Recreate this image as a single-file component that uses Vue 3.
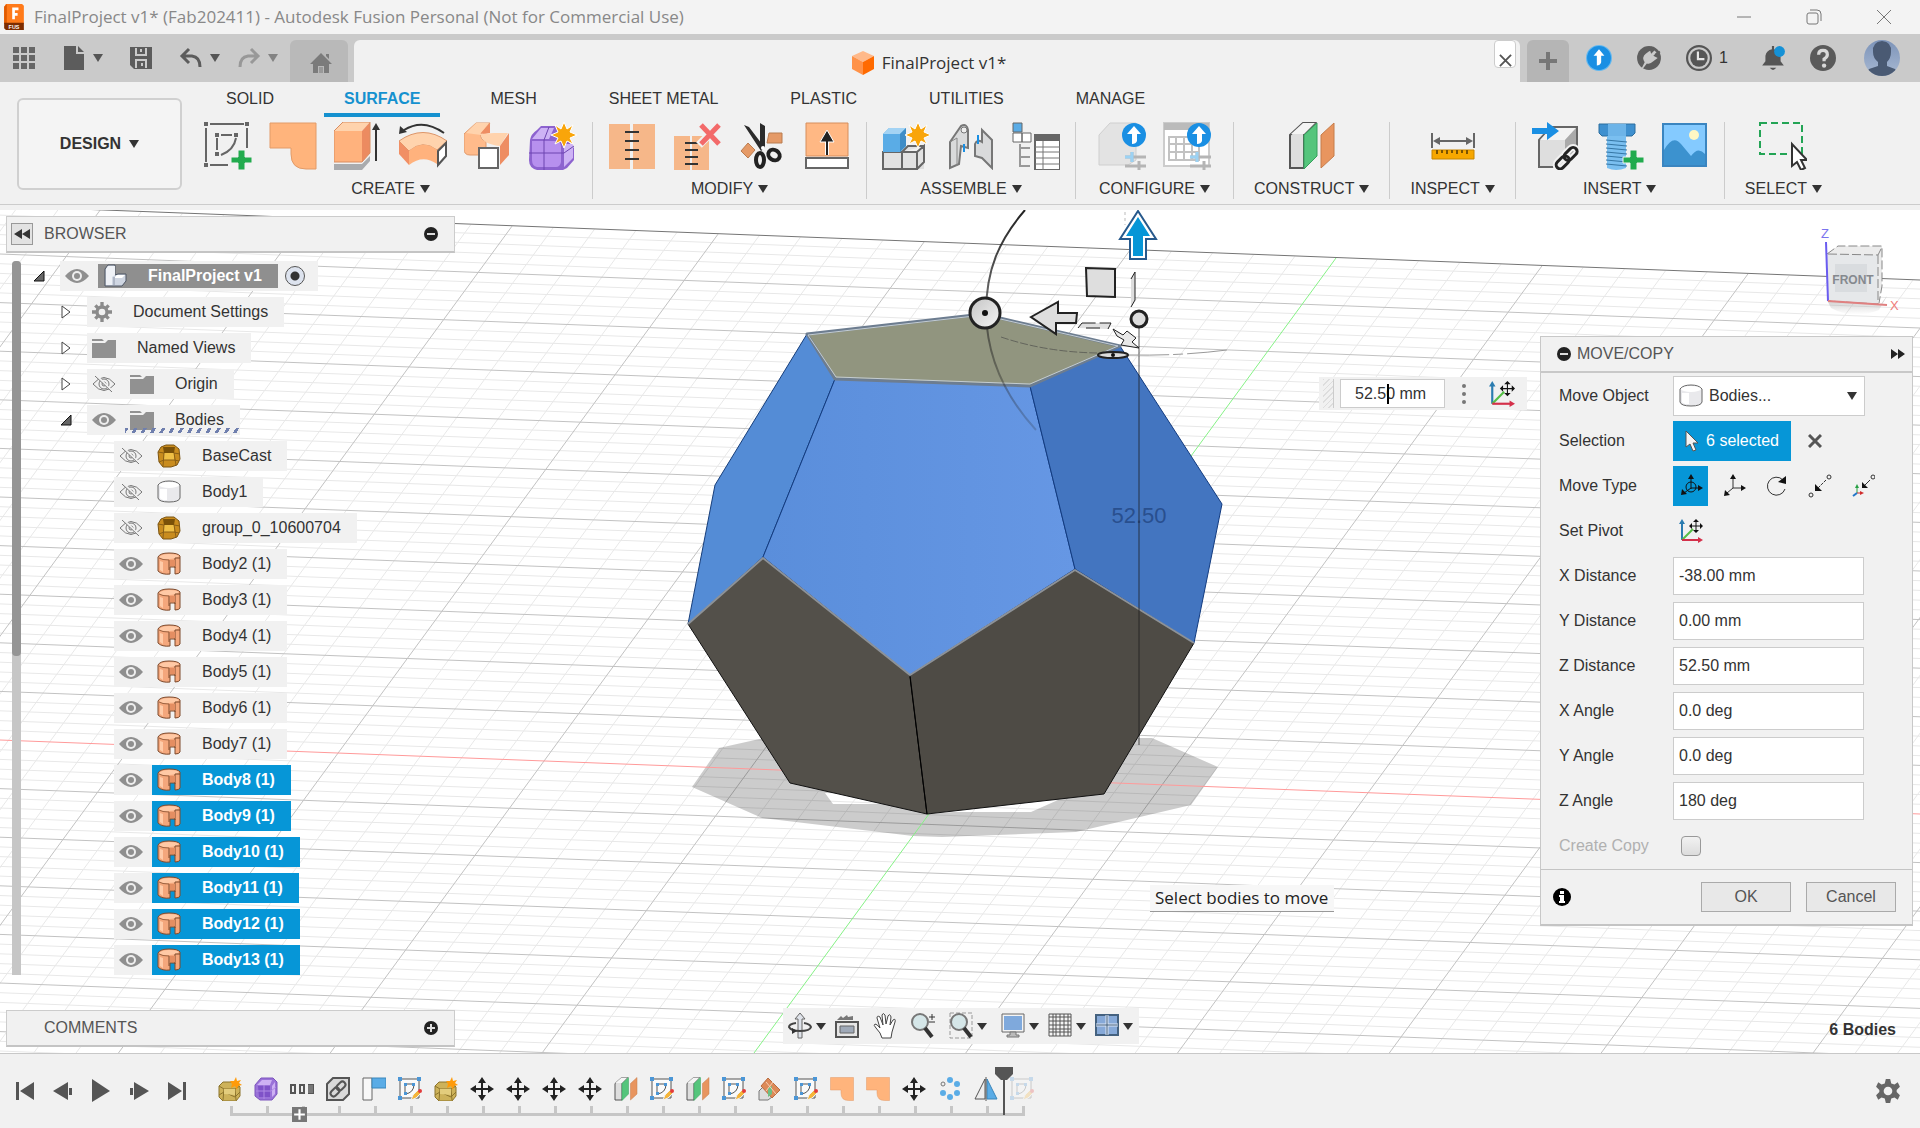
<template>
  <div class="app">
    <header class="titlebar">
      <svg class="titlebar__logo" viewBox="0 0 22 29">
        <path d="M2 0H20L22 2V22H0V3Z" fill="#ff7a1a" />
        <path d="M0 3L3 0V22H0Z" fill="#e05a00" />
        <path d="M0 21H22V29H2L0 27Z" fill="#7d2c00" />
        <path d="M9 4H16V7H12V10H15V13H12V17H9Z" fill="#fff" />
        <text x="11" y="28" class="titlebar__fus">FUS</text>
      </svg>
      <span class="titlebar__text">FinalProject v1* (Fab202411) - Autodesk Fusion Personal (Not for Commercial Use)</span>
      <div class="titlebar__controls">
        <button class="plain" aria-label="Minimize"><svg viewBox="0 0 16 16"><path d="M1 8H15" class="win" /></svg></button>
        <button class="plain" aria-label="Restore"><svg viewBox="0 0 16 16"><path d="M1 6Q1 4 3 4H10Q12 4 12 6V13Q12 15 10 15H3Q1 15 1 13ZM4 1H11Q15 1 15 5V12" class="win" /></svg></button>
        <button class="plain" aria-label="Close"><svg viewBox="0 0 16 16"><path d="M1 1L15 15M15 1L1 15" class="win" /></svg></button>
      </div>
    </header>

    <div class="docbar">
      <div class="docbar__tools">
        <button v-for="t in quickTools" :key="t.icon" class="plain docbar__tool" :class="{ dim: t.dim }" :aria-label="t.icon">
          <svg viewBox="0 0 24 24" width="24" height="24" v-html="icons[t.icon]"></svg>
          <i v-if="t.caret" class="caret"></i>
        </button>
      </div>
      <button class="plain docbar__home" aria-label="Home">
        <svg viewBox="0 0 24 24" width="24" height="24" v-html="icons.home"></svg>
      </button>
      <div class="docbar__tab">
        <svg viewBox="0 0 22 24" width="22" height="24">
          <path d="M11 0L22 5L11 11L0 5Z" fill="#ffb98a" />
          <path d="M0 5L11 11V24L0 18Z" fill="#ff9248" />
          <path d="M22 5L11 11V24L22 18Z" fill="#ff6a00" />
        </svg>
        <span>FinalProject v1*</span>
        <button class="docbar__close" aria-label="Close tab"><svg viewBox="0 0 14 14" width="13" height="13"><path d="M1 1L13 13M13 1L1 13" stroke="#555" stroke-width="2" /></svg></button>
      </div>
      <button class="plain docbar__new" aria-label="New tab"><svg viewBox="0 0 20 20" width="20" height="20"><path d="M10 1V19M1 10H19" stroke="#777" stroke-width="4" /></svg></button>
      <div class="docbar__right">
        <button class="plain" aria-label="Updates"><svg viewBox="0 0 24 24" width="26" height="26" v-html="icons.update"></svg></button>
        <button class="plain" aria-label="Extensions"><svg viewBox="0 0 24 24" width="26" height="26" v-html="icons.plug"></svg></button>
        <button class="plain docbar__jobs" aria-label="Jobs"><svg viewBox="0 0 24 24" width="26" height="26" v-html="icons.clock"></svg>1</button>
        <button class="plain" aria-label="Notifications"><svg viewBox="0 0 24 24" width="26" height="26" v-html="icons.bell"></svg></button>
        <button class="plain" aria-label="Help"><svg viewBox="0 0 24 24" width="26" height="26" v-html="icons.help"></svg></button>
        <button class="plain docbar__user" aria-label="Account"><svg viewBox="0 0 36 36" width="36" height="36" v-html="icons.user"></svg></button>
      </div>
    </div>

    <div class="ribbon">
      <button class="ribbon__design">DESIGN <i class="caret"></i></button>
      <div class="ribbon__main">
        <nav class="ribbon__tabs">
          <button
            v-for="tab in tabs"
            :key="tab"
            class="ribbon__tab"
            :class="{ active: activeTab === tab }"
            @click="activeTab = tab"
          >
            {{ tab }}
          </button>
        </nav>
        <div class="ribbon__groups">
          <div v-for="group in groups" :key="group.name" class="group">
            <div class="group__icons">
              <button v-for="icon in group.icons" :key="icon" class="plain" :aria-label="icon">
                <svg viewBox="0 0 48 48" width="48" height="48" v-html="icons[icon]"></svg>
              </button>
            </div>
            <button class="plain group__label">{{ group.name }} <i class="caret"></i></button>
          </div>
        </div>
      </div>
    </div>

    <main class="canvas">
      <svg class="canvas__scene" viewBox="0 210 1920 843" preserveAspectRatio="xMidYMid slice">
        <defs>
          <linearGradient id="front" x1="0" x2="1">
            <stop offset="0" stop-color="#5a8edb" />
            <stop offset="1" stop-color="#6697e4" />
          </linearGradient>
          <linearGradient id="arc" x1="0" y1="0" x2="0" y2="1">
            <stop offset="0" stop-color="#222" />
            <stop offset="1" stop-color="#222" stop-opacity="0.2" />
          </linearGradient>
          <linearGradient id="knob" x1="0" y1="0" x2="1" y2="1">
            <stop offset="0" stop-color="#c4c4c4" />
            <stop offset="1" stop-color="#f5f5f5" />
          </linearGradient>
        </defs>
        <path :d="minorLines" class="grid-minor" />
        <path :d="majorLines" class="grid-major" />
        <path d="M0 206L1920 280" stroke="#757575" />

        <path
          d="M692 787L719 748L764 738H1152L1218 767L1191 805L1076 832L942 837L913 836L762 818Z M825 793L833 804L893 804L927 814L954 812L1031 812L1058 800Z"
          fill="#000"
          fill-opacity="0.2"
          fill-rule="evenodd"
        />
        <path d="M0 740L1920 814" stroke="#ff9a9a" />
        <path d="M1336 258L754 1053" stroke="#86f286" />

        <g stroke-linejoin="round">
          <path d="M688 624L763 557L910 675L927 814L790 783Z" fill="#53504a" stroke="#111" />
          <path d="M910 675L1075 569L1194 643L1104 794L927 814Z" fill="#4e4b45" stroke="#111" />
          <path d="M807 334L835 379L763 557L688 624L715 485Z" fill="#548cd6" stroke="#173e7a" />
          <path d="M835 379L1030 386L1075 569L910 675L763 557Z" fill="url(#front)" stroke="#123b80" />
          <path d="M1030 386L1120 346L1222 504L1194 643L1075 569Z" fill="#4375c0" stroke="#123b80" />
          <path d="M807 334L983 314L1120 346L1030 386L835 379Z" fill="#91957f" stroke="#6d7d90" stroke-width="3" />
          <path d="M808 335L983 315L1118 346L1030 384L836 377Z" fill="none" stroke="#c3ccd2" />
          <path d="M688 624L763 558L910 675L1075 570L1194 643" fill="none" stroke="#8d9298" stroke-width="2" />
          <path d="M910 677L927 814" stroke="#000" />
        </g>

        <text x="1139" y="523" class="dim-text">52.50</text>

        <path d="M1139 328V745" stroke="#1c1c1c" stroke-opacity="0.75" />
        <path d="M1025 210C999 240 986 270 986 313C987 355 1004 395 1036 430" fill="none" stroke="url(#arc)" stroke-width="2" />
        <path d="M1001 337Q1045 352 1097 353" fill="none" stroke="#444" stroke-opacity="0.6" stroke-dasharray="8 2" />
        <path d="M1129 355Q1180 356 1227 350" fill="none" stroke="#999" stroke-dasharray="40 4 10 4" />
        <circle cx="985" cy="313" r="15" fill="url(#knob)" stroke="#222" stroke-width="3" />
        <circle cx="985" cy="313" r="3" fill="#111" />
        <path d="M1031 317L1058 302V313L1077 313L1076 323H1056V334Z" class="handle" />
        <path d="M1086 268L1115 269V297L1087 296Z" class="handle" />
        <path d="M1131 278L1135 272V300L1131 307Z" fill="#ddd" />
        <path d="M1135 272V300M1131 307L1135 300M1131 279L1135 272" fill="none" stroke="#222" stroke-width="1" />
        <path d="M1078 328L1082 323H1111L1108 329Z" fill="#e0e0e0" />
        <path d="M1078 328L1082 323H1111L1108 329M1086 328H1100" fill="none" stroke="#222" stroke-dasharray="20 4" />
        <path d="M1113 329L1123 335L1127 331L1136 338L1132 342L1139 348L1121 345L1124 340L1117 336Z" fill="#e8e8e8" stroke="#222" />
        <ellipse cx="1113" cy="355" rx="15" ry="3" fill="#dcdcdc" stroke="#222" stroke-width="2" />
        <circle cx="1113" cy="355" r="2" fill="#111" />
        <circle cx="1139" cy="319" r="8" fill="#ddd" stroke="#222" stroke-width="3" />
        <path d="M1125 212V225" stroke="#bbb" stroke-dasharray="3 3" />
        <path d="M1138 211L1156 239H1146V259H1130V239H1120Z" fill="#fff" stroke="#27598c" stroke-width="2" />
        <path d="M1138 217L1150 236H1143V256H1133V236H1126Z" fill="#0696d7" />
      </svg>

      <section class="browser">
        <div class="panel-head">
          <button class="browser__fold" aria-label="Collapse"><svg viewBox="0 0 18 12" width="18" height="12"><path d="M9 1V11L1 6ZM17 1V11L9 6Z" fill="#333" /></svg></button>
          <span>BROWSER</span>
          <button class="plain" aria-label="Hide browser"><svg viewBox="0 0 14 14" width="14" height="14" v-html="icons.minus"></svg></button>
        </div>
        <div class="browser__body">
          <div class="browser__scroll"><div class="browser__thumb"></div></div>
          <ul class="tree">
            <li v-for="node in nodes" :key="node.label" class="tree__row" :class="['level-' + node.level, { selected: node.selected, root: node.level === 0, target: node.target }]">
              <button v-if="node.level < 2" class="plain tree__toggle" :aria-label="'Toggle ' + node.label">
                <svg viewBox="0 0 12 14" width="12" height="14">
                  <path v-if="node.open" d="M11 2V12H1Z" fill="#666" stroke="#111" />
                  <path v-else d="M2 1L10 7L2 13Z" fill="#fff" stroke="#444" />
                </svg>
              </button>
              <div class="tree__cells">
                <button v-if="node.eye" class="plain tree__eye" :aria-label="'Visibility of ' + node.label">
                  <svg viewBox="0 0 24 16" width="24" height="16" v-html="icons['eye' + node.eye]"></svg>
                </button>
                <div class="tree__item">
                  <svg viewBox="0 0 24 24" :width="node.icon === 'gear' ? 20 : 24" height="24" v-html="icons[node.icon]"></svg>
                  <span>{{ node.label }}</span>
                </div>
                <input v-if="node.level === 0" type="radio" class="tree__radio" checked aria-label="Activate component" />
              </div>
            </li>
          </ul>
        </div>
      </section>

      <section class="comments panel-head">
        <span>COMMENTS</span>
        <button class="plain" aria-label="Show comments"><svg viewBox="0 0 14 14" width="14" height="14" v-html="icons.plus"></svg></button>
      </section>

      <div class="viewcube">
        <svg viewBox="0 -8 90 98" width="90" height="98">
          <defs>
            <linearGradient id="shade" x1="0" y1="0" x2="0" y2="1">
              <stop offset="0" stop-color="#777" stop-opacity="0.5" />
              <stop offset="1" stop-color="#999" stop-opacity="0" />
            </linearGradient>
          </defs>
          <path d="M8 72L62 76L68 68L60 82Q34 92 12 80Z" fill="url(#shade)" />
          <path d="M8 26L19 18H63V58L59 76L8 72Z" fill="#ececec" />
          <path d="M8 26L59 27V76L9 72Z" fill="#e6e8ea" fill-opacity="0.9" />
          <path d="M16 36H48V64H16Z" fill="#d9dcdf" />
          <path d="M8 26L19 18H63V58L60 75M9 26L59 27L63 19M59 27V76L9 73" fill="none" stroke="#888" stroke-dasharray="9 3" />
          <path d="M7 14L9 73" stroke="#6a5cf0" stroke-width="2" />
          <path d="M9 73L68 77" stroke="#e08080" stroke-width="2" />
          <text x="2" y="10" class="cube-z">Z</text>
          <text x="71" y="82" class="cube-x">X</text>
          <text x="34" y="56" class="cube-face">FRONT</text>
        </svg>
      </div>

      <div class="value-box">
        <span class="value-box__grip"></span>
        <div class="value-box__field">
          <input v-model="zDistance" type="text" aria-label="Distance" />
          <i></i>
        </div>
        <button class="plain value-box__dots" aria-label="More"><svg viewBox="0 0 6 22" width="6" height="22" fill="#777"><circle cx="3" cy="3" r="2" /><circle cx="3" cy="11" r="2" /><circle cx="3" cy="19" r="2" /></svg></button>
        <button class="plain" aria-label="Set pivot"><svg viewBox="0 0 24 24" width="26" height="26" v-html="icons.pivot"></svg></button>
      </div>

      <form class="dialog" @submit.prevent>
        <div class="dialog__head">
          <button type="button" class="plain" aria-label="Collapse dialog"><svg viewBox="0 0 14 14" width="14" height="14" v-html="icons.minus"></svg></button>
          <span>MOVE/COPY</span>
          <button type="button" class="plain" aria-label="Dock"><svg viewBox="0 0 16 12" width="16" height="12"><path d="M1 1V11L8 6ZM8 1V11L15 6Z" fill="#222" /></svg></button>
        </div>
        <div class="dialog__rows">
          <div class="dialog__row">
            <label for="move-object">Move Object</label>
            <div class="dialog__select">
              <svg viewBox="0 0 24 24" width="24" height="24" v-html="icons.body"></svg>
              <select id="move-object"><option>Bodies...</option></select>
              <i class="caret"></i>
            </div>
          </div>
          <div class="dialog__row">
            <span>Selection</span>
            <button type="button" class="dialog__picked">
              <svg viewBox="0 0 14 22" width="14" height="22"><path d="M1 1V17L5 14L8 21L11 20L8 13H13Z" fill="#f4f4f4" stroke="#555" /></svg>
              6 selected
            </button>
            <button type="button" class="plain dialog__clear" aria-label="Clear selection"><svg viewBox="0 0 14 14" width="14" height="14"><path d="M1 1L13 13M13 1L1 13" stroke="#555" stroke-width="3" /></svg></button>
          </div>
          <div class="dialog__row">
            <span>Move Type</span>
            <div class="dialog__types">
              <button
                v-for="type in moveTypes"
                :key="type"
                type="button"
                class="plain"
                :class="{ active: moveType === type }"
                :aria-label="type"
                @click="moveType = type"
              >
                <svg viewBox="0 0 24 24" width="24" height="24" v-html="icons[type]"></svg>
              </button>
            </div>
          </div>
          <div class="dialog__row">
            <span>Set Pivot</span>
            <button type="button" class="plain dialog__pivot" aria-label="Set pivot"><svg viewBox="0 0 24 24" width="24" height="24" v-html="icons.pivot"></svg></button>
          </div>
          <div v-for="field in fields" :key="field.label" class="dialog__row">
            <label :for="field.id">{{ field.label }}</label>
            <input :id="field.id" v-model="field.value" type="text" class="dialog__input" />
          </div>
          <div class="dialog__row disabled">
            <label for="create-copy">Create Copy</label>
            <input id="create-copy" type="checkbox" class="dialog__check" disabled />
          </div>
        </div>
        <div class="dialog__foot">
          <svg viewBox="0 0 18 18" width="18" height="18"><circle cx="9" cy="9" r="9" fill="#000" /><path d="M7 3H11V6H7ZM6 7H11V13H12V15H6V13H7V9H6Z" fill="#fff" /></svg>
          <button type="submit">OK</button>
          <button type="button">Cancel</button>
        </div>
      </form>

      <div class="hint">Select bodies to move</div>

      <div class="navbar">
        <button v-for="item in navItems" :key="item.icon" class="plain navbar__item" :aria-label="item.icon">
          <svg viewBox="0 0 24 28" width="24" height="28" v-html="icons[item.icon]"></svg>
          <i v-if="item.caret" class="caret"></i>
        </button>
      </div>

      <div class="status">6 Bodies</div>
    </main>

    <footer class="timeline">
      <div class="timeline__play">
        <button v-for="p in playback" :key="p.name" class="plain" :aria-label="p.name">
          <svg viewBox="0 0 20 24" width="20" height="24"><path :d="p.d" fill="#555" /></svg>
        </button>
      </div>
      <ol class="timeline__track">
        <li v-for="(step, i) in steps" :key="i" class="timeline__step" :class="{ future: i === steps.length - 1 }">
          <svg :viewBox="step === 'patch' || step === 'construct' ? '0 0 48 48' : '0 0 24 24'" width="24" height="24" v-html="icons[step]"></svg>
          <span v-if="step === 'group'" class="timeline__plus"><svg viewBox="0 0 14 14" width="15" height="15"><path d="M0 0H14V14H0Z" fill="#777" /><path d="M7 2V12M2 7H12" stroke="#fff" stroke-width="2" /></svg></span>
          <span v-if="i === steps.length - 2" class="timeline__head"><svg viewBox="0 0 18 48" width="18" height="48"><path d="M0 0H18V7L12 13H10V48H8V13H6L0 7Z" fill="#555" /></svg></span>
        </li>
      </ol>
      <button class="plain timeline__gear" aria-label="Timeline settings"><svg viewBox="0 0 24 24" width="26" height="26" v-html="icons.cog"></svg></button>
    </footer>
  </div>
</template>

<script setup>
import { ref, reactive } from "vue";

const tabs = ["SOLID", "SURFACE", "MESH", "SHEET METAL", "PLASTIC", "UTILITIES", "MANAGE"];
const activeTab = ref("SURFACE");
const moveType = ref("free");
const moveTypes = ["free", "translate", "rotate", "point", "pointpos"];
const zDistance = ref("52.50 mm");

const quickTools = [
  { icon: "apps" },
  { icon: "file", caret: true },
  { icon: "save" },
  { icon: "undo", caret: true },
  { icon: "redo", caret: true, dim: true },
];

const groups = [
  { name: "CREATE", icons: ["sketch", "patch", "extrude", "revolve", "loft", "form"] },
  { name: "MODIFY", icons: ["stitch", "unstitch", "trim", "extend"] },
  { name: "ASSEMBLE", icons: ["component", "joint", "bom"] },
  { name: "CONFIGURE", icons: ["config", "configTable"] },
  { name: "CONSTRUCT", icons: ["construct"] },
  { name: "INSPECT", icons: ["measure"] },
  { name: "INSERT", icons: ["derive", "fastener", "image"] },
  { name: "SELECT", icons: ["select"] },
];

const bodies = [2, 3, 4, 5, 6, 7, 8, 9, 10, 11, 12, 13].map((n) => ({
  label: `Body${n} (1)`,
  level: 2,
  eye: "On",
  icon: "surface",
  selected: n >= 8,
}));

const nodes = [
  { label: "FinalProject v1", level: 0, eye: "On", icon: "comp", open: true },
  { label: "Document Settings", level: 1, icon: "gear" },
  { label: "Named Views", level: 1, icon: "folder" },
  { label: "Origin", level: 1, eye: "Off", icon: "folder" },
  { label: "Bodies", level: 1, eye: "On", icon: "folder", open: true, target: true },
  { label: "BaseCast", level: 2, eye: "Off", icon: "mesh" },
  { label: "Body1", level: 2, eye: "Off", icon: "body" },
  { label: "group_0_10600704", level: 2, eye: "Off", icon: "mesh" },
  ...bodies,
];

const fields = reactive([
  { id: "x-distance", label: "X Distance", value: "-38.00 mm" },
  { id: "y-distance", label: "Y Distance", value: "0.00 mm" },
  { id: "z-distance", label: "Z Distance", value: "52.50 mm" },
  { id: "x-angle", label: "X Angle", value: "0.0 deg" },
  { id: "y-angle", label: "Y Angle", value: "0.0 deg" },
  { id: "z-angle", label: "Z Angle", value: "180 deg" },
]);

const navItems = [
  { icon: "orbit", caret: true },
  { icon: "lookat" },
  { icon: "pan" },
  { icon: "zoom" },
  { icon: "fit", caret: true },
  { icon: "display", caret: true },
  { icon: "grid", caret: true },
  { icon: "viewports", caret: true },
];

const playback = [
  { name: "First", d: "M1 3H4V21H1ZM19 3V21L5 12Z" },
  { name: "Back", d: "M15 3V21L0 12ZM16 9H19V16H16Z" },
  { name: "Play", d: "M1 0L19 12L1 23Z" },
  { name: "Forward", d: "M5 3L20 12L5 21ZM1 9H4V16H1Z" },
  { name: "Last", d: "M1 3L15 12L1 21ZM16 3H19V21H16Z" },
];

const steps = [
  "meshNew", "formSmall", "group", "link", "flag", "sketchSmall", "meshNew",
  "move", "move", "move", "move", "construct", "sketchSmall", "construct",
  "sketchSmall", "split", "sketchSmall", "patch", "patch", "move", "pattern",
  "mirror", "sketchSmall",
];

// ground grid: both line families stay parallel, 5 minor cells per major cell
const majors = [];
const minors = [];
for (let i = -55; i < 90; i++) {
  const y = Math.round((740 + 9.72 * i) * 10) / 10;
  const line = `M0 ${y}L1920 ${Math.round((y + 74) * 10) / 10}`;
  if (i === 0 || i === -55) continue;
  (i % 5 === 0 ? majors : minors).push(line);
}
for (let i = -34; i < 30; i++) {
  if (i === 0) continue;
  const x = 1336 + 41.2 * i;
  const y = 258 + 1.59 * i;
  const line = `M${x.toFixed(1)} ${y.toFixed(1)}L${(x - 659).toFixed(1)} ${(y + 900).toFixed(1)}`;
  (i % 5 === 0 ? majors : minors).push(line);
}
const majorLines = majors.join("");
const minorLines = minors.join("");

const star = (x, y) =>
  `<path transform="translate(${x} ${y})" d="M0-13L3-6L9-10L6-3L13 0L6 3L9 9L3 6L0 13L-3 6L-9 9L-6 3L-13 0L-6-3L-9-10L-3-6Z" fill="#f9a50a" stroke="#fff" stroke-width="1"/>`;
const cross = '<path d="M34 28H41V35H48V41H41V48H34V41H27V35H34Z" fill="#22ab4e" stroke="#f1f1f1"/>';
const badge =
  '<circle cx="36" cy="13" r="12" fill="#1a8fe3"/><path d="M36 4L43 12H39V19Q38 22 34 22V12H29Z" fill="#fff"/>';
const sliders =
  '<path d="M27 35H48M27 44H48M34 30V40M41 39V48" stroke="#b5b5b5" stroke-width="3" fill="none"/><path d="M27 35H34M34 30V40" stroke="#9cd2f3" stroke-width="3"/>';
const meshShape =
  '<path d="M4 3L9 1H17L22 5L23 15L20 21L14 23H6L2 18L1 8Z" fill="#c98c1e" stroke="#7b5413"/><path d="M6 3H18L17 9H7Z" fill="#7a5108"/><path d="M7 9H17V16H7Z" fill="#efbf45"/><path d="M1 8L7 9L6 22M23 10L17 9L19 21M2 18L7 16H17L22 17" fill="none" stroke="#8a5f16"/>';
const lens = (x) =>
  `<circle cx="${x}" cy="10" r="8" fill="#d5e6e8" stroke="#777" stroke-width="2"/><path d="M${x + 5} 16L${x + 12} 25" stroke="#333" stroke-width="4"/>`;

const icons = {
  apps: '<path d="M1 1H7V7H1ZM9 1H15V7H9ZM17 1H23V7H17ZM1 9H7V15H1ZM9 9H15V15H9ZM17 9H23V15H17ZM1 17H7V23H1ZM9 17H15V23H9ZM17 17H23V23H17Z" fill="#666"/>',
  file: '<path d="M2 0H14V8H22V24H2ZM16 0L22 6H16Z" fill="#5c5c5c"/>',
  save: '<path d="M1 1H23V23H5L1 19Z" fill="#5c5c5c"/><path d="M7 2V9H17V2M12 3V6M7 22V14H17V22M13 17V20" stroke="#cacaca" stroke-width="2" fill="none"/>',
  undo: '<path d="M10 3L3 10L10 17M4 10H13Q21 11 21 21" fill="none" stroke="#5c5c5c" stroke-width="3"/>',
  redo: '<path d="M14 3L21 10L14 17M20 10H11Q3 11 3 21" fill="none" stroke="#777" stroke-width="3"/>',
  home: '<path d="M12 2L23 13H20V22H15V15H9V22H4V13H1ZM17 3H20V8L17 5Z" fill="#7b7b7b"/><path d="M10 16H14V22H10Z" fill="#999"/>',
  update: '<circle cx="12" cy="12" r="12" fill="#62b8f0"/><circle cx="12" cy="12" r="11" fill="#1a8fe3"/><path d="M12 4L17 10H14V16Q13 19 10 19V10H7Z" fill="#fff"/>',
  plug: '<circle cx="12" cy="12" r="11" fill="#5e5e5e"/><path d="M4 24L8 16Q5 11 9 8L13 5L14 8L17 5L19 7L16 10L20 12L16 15Q13 18 10 17L7 21" fill="#cacaca"/><path d="M12 5L15 2M18 9L22 6" stroke="#5e5e5e" stroke-width="2"/>',
  clock: '<circle cx="12" cy="12" r="11" fill="none" stroke="#555" stroke-width="2"/><circle cx="12" cy="12" r="8" fill="#555"/><path d="M11 6V13H17" stroke="#e5e5e5" stroke-width="2" fill="none"/>',
  bell: '<path d="M11 1H13V4Q18 5 19 11V15L22 19H2L5 15V10Q6 5 11 4Z" fill="#555"/><path d="M9 21H15Q12 25 9 21Z" fill="#555"/><circle cx="18" cy="6" r="5" fill="#1591d6"/>',
  help: '<circle cx="12" cy="12" r="12" fill="#5a5a5a"/><path d="M8 9Q8 5 12 5Q16 5 16 9Q16 11 13 13V15" fill="none" stroke="#d8d8d8" stroke-width="3"/><circle cx="13" cy="19" r="2" fill="#d8d8d8"/>',
  user: '<defs><clipPath id="av"><circle cx="18" cy="18" r="18"/></clipPath><linearGradient id="avg" x1="0" y1="0" x2="0" y2="1"><stop offset="0" stop-color="#7c93b8"/><stop offset="1" stop-color="#a8b9d3"/></linearGradient></defs><g clip-path="url(#av)"><path d="M0 0H36V36H0Z" fill="url(#avg)"/><path d="M18 1Q28 2 27 12Q27 18 23 22V26L31 29L36 36H0L5 29L14 26V22Q9 18 9 12Q8 2 18 1Z" fill="#4a5a73"/></g>',

  sketch:
    '<path d="M2 6V40M6 2H40M43 6V26M6 43H24M13 16V28M17 13H28M32 16Q30 28 17 33" fill="none" stroke="#666" stroke-width="2"/><path d="M0 0H4V4H0ZM41 0H45V4H41ZM0 41H4V45H0ZM11 11H15V15H11ZM30 11H34V15H30ZM11 30H15V34H11Z" fill="#666"/>' + cross,
  patch: '<path d="M1 1H47V47H37Q22 47 22 32V26H1Z" fill="#ffb47c" stroke="#e29b68"/>',
  extrude:
    '<path d="M0 42H28L36 34V39L28 48H0Z" fill="#a9abae"/><path d="M0 9L9 0H36L28 9Z" fill="#ffd3ad"/><path d="M0 9H28V40H0Z" fill="#ffb27d"/><path d="M28 9L36 0V31L28 40Z" fill="#ec8b60"/><path d="M0 9L9 0H36V31L28 40H0Z" fill="none" stroke="#d98d60"/><path d="M42 39V7" stroke="#333" stroke-width="2"/><path d="M42 1L46 8H38Z" fill="#333"/>',
  revolve:
    '<path d="M45 11Q24-4 5 8" fill="none" stroke="#333" stroke-width="2"/><path d="M0 12L1 4L8 10Z" fill="#333"/><path d="M0 19Q24 2 48 19L38 28Q24 17 10 29Z" fill="#ffd3ad" stroke="#dd9568"/><path d="M0 19L10 29V43L0 32Z" fill="#f18f65"/><path d="M10 29Q24 17 38 28V42Q24 32 10 43Z" fill="#ffb27d"/><path d="M39 29L47 21V34L39 43Z" fill="#fff" stroke="#555" stroke-width="2"/>',
  loft:
    '<path d="M0 12L12 1H26L17 12Q16 18 22 19V33H6Q0 33 0 27Z" fill="#ffbb8b" stroke="#e09a6c"/><path d="M26 1V11L17 13Z" fill="#ee8d62"/><path d="M2 11L12 1H25L16 12L30 11H44L36 24Q18 22 17 13Z" fill="#ffd3ad"/><path d="M25 2V11H17Z" fill="#ee8d62"/><path d="M36 24L45 11V33L36 43Z" fill="#ee8d62"/><path d="M15 26H34V46H15Z" fill="#fff" stroke="#666" stroke-width="2"/>',
  form:
    '<path d="M1 18Q2 12 8 8L12 4H26L45 26V38L38 46L34 48H8Q0 46 0 38Z" fill="#8d63cf"/><path d="M3 19H28Q32 20 32 25V40Q31 45 27 45H8Q3 44 3 38Z" fill="#b790ee"/><path d="M3 17L12 6H25L20 17ZM35 22L44 22V36L35 45Z" fill="#cdb2f5"/><path d="M0 31H35L45 24M15 48V18L20 5" fill="none" stroke="#6d45b0"/>' + star(35, 13),
  stitch: '<path d="M1 2H22V47H1ZM25 2H47V47H25Z" fill="#f6b789"/><path d="M17 10H31M17 19H31M17 28H31M17 37H31" stroke="#333" stroke-width="2"/>',
  unstitch: '<path d="M1 14H17V48H1ZM19 14H36V48H19Z" fill="#f6b789"/><path d="M12 21H25M12 28H25M12 35H25M12 42H25" stroke="#333" stroke-width="2"/><path d="M26 2L47 23M47 2L26 23" stroke="#f1f1f1" stroke-width="8"/><path d="M28 3L46 22M46 3L28 22" stroke="#f36a6a" stroke-width="5"/>',
  trim:
    '<path d="M3 29L10 21L17 28L10 36ZM31 11H44V21H29Z" fill="#e59a67" stroke="#b97c50"/><path d="M6 3L23 29L27 26L11 5ZM22 1V24L27 26V4Z" fill="#2b2b2b"/><ellipse cx="22" cy="38" rx="4" ry="7" fill="none" stroke="#222" stroke-width="4"/><ellipse cx="36" cy="33" rx="6" ry="5" transform="rotate(35 36 33)" fill="none" stroke="#222" stroke-width="4"/><circle cx="25" cy="26" r="2" fill="#fff"/>',
  extend: '<path d="M3 1H45V34H3Z" fill="#ffb884" stroke="#d68e5d"/><path d="M3 36H45V46H3Z" fill="#fff" stroke="#666" stroke-width="2"/><path d="M24 33V14" stroke="#fff" stroke-width="4"/><path d="M24 8L31 20H17Z" fill="#222" stroke="#fff"/><path d="M24 33V18" stroke="#222" stroke-width="2"/>',
  component:
    '<path d="M1 30H42V47H1Z" fill="#ddd"/><path d="M1 30H20V47H1ZM20 30H35V47H20ZM35 30L42 24V40L35 47M20 30L26 24H42" fill="#e2e2e2" stroke="#666" stroke-width="2"/><path d="M1 12L7 6H24V24L18 30H1Z" fill="#5aace6"/><path d="M1 12L7 6H24L18 12Z" fill="#a3d3f4"/><path d="M18 12L24 6V24L18 30Z" fill="#3f8dc7"/>' + star(36, 13),
  joint:
    '<path d="M3 20L14 4Q20 1 21 8V26L14 24L12 42L3 46Z" fill="#d9dadb" stroke="#777" stroke-width="2"/><path d="M3 20L10 16V44" fill="none" stroke="#888"/><circle cx="17" cy="8" r="3" fill="#eee" stroke="#777"/><path d="M28 22Q30 17 35 20V8L45 18V46L35 36L28 34Z" fill="#d9dadb" stroke="#777" stroke-width="2"/><path d="M17 22V30M31 13V22" stroke="#1a8fe3" stroke-width="2"/>',
  bom:
    '<path d="M1 1H10V10H1Z" fill="#5aace6" stroke="#666"/><path d="M1 11H10V20H1ZM10 11H19V20H10Z" fill="#fff" stroke="#666"/><path d="M8 22V45M8 26H18M8 35H18M8 44H18" stroke="#999" stroke-width="2" fill="none"/><path d="M23 13H48V48H23Z" fill="#fff" stroke="#666" stroke-width="2"/><path d="M23 13H48V19H23Z" fill="#666"/><path d="M31 19V48M23 25H48M23 30H48M23 36H48M23 42H48" stroke="#777"/>',
  config: '<path d="M1 13L12 1H38V38L30 43H1Z" fill="#e3e3e3" stroke="#cfcfcf"/>' + badge + sliders,
  configTable: '<path d="M1 1H46V44H1Z" fill="#fff" stroke="#ccc" stroke-width="2"/><path d="M1 1H46V8H1Z" fill="#bbb"/><path d="M6 15H36V38H6ZM13 15V38M21 15V38M29 15V38M6 22H36M6 30H36" fill="none" stroke="#c2c2c2" stroke-width="2"/>' + badge + sliders,
  construct: '<path d="M2 13L15 1H27L16 13V46H2Z" fill="#dedede" stroke="#555" stroke-width="2"/><path d="M3 12L15 1H27L16 12Z" fill="#f4f4f4"/><path d="M16 13L29 1V34L16 47Z" fill="#55c57c" stroke="#35a05c"/><path d="M33 13L46 1V34L33 46Z" fill="#e8955f" stroke="#c67c4a"/>',
  measure: '<path d="M3 11V26M45 11V26M7 19H41" stroke="#666" stroke-width="2"/><path d="M4 19L11 15V23ZM44 19L37 15V23Z" fill="#666"/><path d="M3 28H45V37H3Z" fill="#f7a700" stroke="#c78500"/><path d="M8 28V32M13 28V31M18 28V32M23 28V31M28 28V32M33 28V31M38 28V32" stroke="#7a5200" stroke-width="2"/>',
  derive: '<path d="M8 18L20 5H46V32L34 45H8Z" fill="#dedede" stroke="#666" stroke-width="2"/><path d="M9 18L20 6H45L34 18Z" fill="#f3f3f3"/><path d="M34 18L45 6V32L34 45Z" fill="#aaa"/><path d="M1 6H16V0L28 9L16 18V12H1Z" fill="#1a8fe3"/><g fill="none" stroke="#f1f1f1" stroke-width="7"><rect x="24" y="36" width="15" height="8" rx="4" transform="rotate(-45 32 40)"/><rect x="33" y="28" width="15" height="8" rx="4" transform="rotate(-45 40 33)"/></g><g fill="none" stroke="#222" stroke-width="3"><rect x="24" y="36" width="15" height="8" rx="4" transform="rotate(-45 32 40)"/><rect x="33" y="28" width="15" height="8" rx="4" transform="rotate(-45 40 33)"/></g>',
  fastener: '<path d="M3 2H39V11L36 14H6L3 11Z" fill="#3f90cf" stroke="#2c6e9f"/><path d="M12 2H30V14H12Z" fill="#6db4e8"/><path d="M11 14H30V46Q20 50 11 46Z" fill="#7abff0"/><path d="M10 18L31 20M10 22L31 24M10 26L31 28M10 30L31 32M10 34L31 36M10 38L31 40M10 42L31 44" stroke="#3576a5"/>' + cross,
  image: '<path d="M2 2H45V44H2Z" fill="#84caff" stroke="#3a85c0" stroke-width="2"/><circle cx="33" cy="13" r="5" fill="#fff7c4"/><path d="M3 28Q12 12 20 22L30 34Q37 24 44 32V43H3Z" fill="#3c92cf"/>',
  select: '<path d="M1 1H43V32H1Z" fill="none" stroke="#23a455" stroke-width="2" stroke-dasharray="7 4"/><path d="M33 22V44L38 40L42 48L46 46L42 38H48Z" fill="#fff" stroke="#333" stroke-width="2"/>',

  minus: '<circle cx="7" cy="7" r="7" fill="#222"/><path d="M3 7H11" stroke="#ddd" stroke-width="2"/>',
  plus: '<circle cx="7" cy="7" r="7" fill="#222"/><path d="M3 7H11M7 3V11" stroke="#ddd" stroke-width="2"/>',
  eyeOn: '<path d="M0 8Q12-6 24 8Q12 22 0 8Z" fill="#8f8f8f"/><circle cx="12" cy="8" r="5" fill="#eee"/><circle cx="12" cy="8" r="3" fill="#8f8f8f"/>',
  eyeOff: '<path d="M1 8Q12-5 23 8Q12 21 1 8Z" fill="none" stroke="#777" stroke-width="1"/><circle cx="12" cy="8" r="5" fill="none" stroke="#777"/><circle cx="12" cy="8" r="2" fill="none" stroke="#777"/><path d="M5 0L21 16" stroke="#f1f1f1" stroke-width="2"/><path d="M3 0L20 16" stroke="#777" stroke-width="1"/>',
  comp: '<path d="M2 5L5 1H12V11L15 10H23V17L19 22H2Z" fill="#cfd6e2" stroke="#4d5563"/><path d="M5 2H12V11L9 13V21H3V5Z" fill="#eef1f6"/><path d="M12 13L14 11H22L19 14H12Z" fill="#fff"/><path d="M11 13V21" stroke="#8d96a8"/>',
  gear: '<circle cx="12" cy="12" r="6" fill="none" stroke="#8b8b8b" stroke-width="4"/><path d="M12 0V5M12 19V24M0 12H5M19 12H24M4 4L7 7M17 17L20 20M20 4L17 7M4 20L7 17" stroke="#8b8b8b" stroke-width="4"/>',
  folder: '<path d="M0 3H10L12 5H0ZM0 7H13L16 4H24V22H0Z" fill="#919191"/>',
  mesh: meshShape,
  body: '<path d="M1 5V18Q2 22 12 22Q22 22 23 18V5Q20 1 12 1Q4 1 1 5Z" fill="#e9e9ec" stroke="#666"/><ellipse cx="12" cy="5" rx="10" ry="3" fill="#fff"/><path d="M3 9H10V20H6Q3 19 3 18Z" fill="#fff"/>',
  surface: '<path d="M1 5Q3 1 12 1Q21 1 23 4V20Q22 22 18 22V15H13V22Q5 23 1 19Z" fill="#f4a77c" stroke="#7c4a2d"/><path d="M2 5Q5 2 12 2Q20 2 22 4Q19 7 12 7Q5 8 2 5Z" fill="#ffc9a5"/><path d="M12 8V18M18 16V6H23" fill="none" stroke="#7c4a2d"/><path d="M13 8H18V14H13Z" fill="#e48e62"/><path d="M12 8Q5 8 2 6" fill="none" stroke="#9c6341"/><path d="M3 9V18L6 20V10Z" fill="#ffcba8"/>',
  pivot: '<path d="M3 21V3" stroke="#2b7cb0" stroke-width="2"/><path d="M0 5L3 0L6 5Z" fill="#2b7cb0"/><path d="M3 21L14 10" stroke="#55c046" stroke-width="2"/><path d="M3 21H20" stroke="#d4304a" stroke-width="2"/><path d="M19 18L24 21L19 24Z" fill="#d4304a"/><path d="M17 2V12M12 7H22" stroke="#111" stroke-width="1"/><path d="M17 0L20 3H14ZM17 14L14 11H20ZM10 7L13 4V10ZM24 7L21 4V10Z" fill="#111"/>',
  free: '<path d="M12 15V3M12 14H21M12 14L5 19" stroke="#111" stroke-width="1"/><path d="M12 0L15 5H9ZM24 14L19 11V17ZM2 21L3 15L8 20Z" fill="#111"/><circle cx="12" cy="13" r="5" fill="none" stroke="#111"/>',
  translate: '<path d="M11 14V3M11 14H21M11 14L5 19" stroke="#333" fill="none"/><path d="M11 0L14 5H8ZM24 14L19 11V17ZM2 22L3 16L8 21Z" fill="#111"/>',
  rotate: '<path d="M18 6A9 9 0 1 0 20 15" fill="none" stroke="#333" stroke-width="1"/><path d="M21 2V10L13 8Z" fill="#111"/>',
  point: '<circle cx="21" cy="3" r="2" fill="none" stroke="#333"/><circle cx="3" cy="21" r="2" fill="none" stroke="#333"/><path d="M18 6L10 14" stroke="#333" stroke-dasharray="3 1"/><path d="M7 17V10L14 17Z" fill="#111"/>',
  pointpos: '<circle cx="22" cy="3" r="2" fill="none" stroke="#333"/><path d="M19 6L14 11" stroke="#333"/><path d="M11 14V8L17 14Z" fill="#111"/><path d="M6 19V12" stroke="#27a043"/><path d="M6 10L8 14H4Z" fill="#27a043"/><path d="M6 19H11" stroke="#d02c2c"/><path d="M13 19L9 17V21Z" fill="#d02c2c"/><path d="M6 19L2 22" stroke="#2276c9" stroke-width="2"/>',

  orbit: '<path d="M12 1L17 7H14V26H10V7H7Z" fill="#dfe3ea" stroke="#666"/><path d="M8 11Q1 12 1 15Q3 19 12 19Q22 19 23 15Q22 12 16 11" fill="none" stroke="#444" stroke-width="2"/><path d="M9 19L4 16V22Z" fill="#333"/>',
  lookat: '<path d="M1 10H23V25H1Z" fill="#e6e6e6" stroke="#555" stroke-width="2"/><path d="M5 14H19V21H5Z" fill="#9fa9b8" stroke="#666"/><path d="M2 8L6 4L8 6L12 3L13 5L18 4V8Z" fill="#777"/>',
  pan: '<path d="M9 26Q8 21 3 16Q0 13 2 12Q4 12 7 16L4 6Q4 3 7 5L10 13L9 3Q10 0 12 3L13 12L15 4Q17 1 18 5L17 13L20 8Q23 6 22 10L19 20L18 26Z" fill="#fff" stroke="#444"/>',
  zoom: lens(9) + '<path d="M18 5H24M21 2V8M18 10H24" stroke="#333"/>',
  fit: '<path d="M1 1H23V26H1Z" fill="none" stroke="#999" stroke-dasharray="4 2"/>' + lens(10),
  display: '<path d="M1 2H23V20H1Z" fill="#f4f4f4" stroke="#666"/><path d="M3 4H21V18H3Z" fill="#7fa9dc"/><path d="M9 20H15V23H18V25H6V23H9Z" fill="#bbb" stroke="#777"/>',
  grid: '<path d="M1 2H23V24H1Z" fill="#f5f5f5" stroke="#555"/><path d="M5 2V24M8 2V24M12 2V24M16 2V24M20 2V24M1 5H23M1 9H23M1 13H23M1 17H23M1 20H23" stroke="#555"/>',
  viewports: '<path d="M1 3H23V23H1Z" fill="#86a9d8" stroke="#44617f" stroke-width="2"/><path d="M12 3V23M1 13H23" stroke="#dbe6f4" stroke-width="3"/><path d="M12 3V23M1 13H23" stroke="#44617f"/>',

  meshNew: '<path d="M1 9L5 5H17L22 10V19L18 24H5L1 20Z" fill="#cdb25a" stroke="#8c742c"/><path d="M1 9L6 12H17L22 9M6 12L5 23M17 12L18 23M1 18L6 15L17 20L22 15" fill="none" stroke="#8c742c"/><path d="M6 12H17V18L6 17Z" fill="#e3cd7d"/><path d="M18 0L19 4L23 3L21 6L24 8L20 9L19 13L17 9L13 11L14 7L12 4L16 4Z" fill="#ff9b0a"/>',
  formSmall: '<path d="M1 8L7 1H19L23 5V17L18 23H6L1 19Z" fill="#9a72d8" stroke="#7d55bd"/><path d="M4 9H16V20H5Z" fill="#7f52c8"/><path d="M3 8L8 3H18L16 8ZM18 9L21 5V17L18 20Z" fill="#cdb0f3"/><path d="M10 8V22M2 14H17L22 10" stroke="#b08be4" fill="none"/>',
  group: '<path d="M1 8H5V16H1ZM10 8H14V16H10ZM19 8H23V16H19Z" fill="#eee" stroke="#555" stroke-width="2"/><path d="M18 8H23V16H18Z" fill="#777"/>',
  link: '<path d="M1 7L7 1H23V17L17 23H1Z" fill="#d9d9d9" stroke="#555" stroke-width="2"/><g fill="none" stroke="#555" stroke-width="2"><rect x="4" y="12" width="10" height="6" rx="3" transform="rotate(-45 9 15)"/><rect x="10" y="6" width="10" height="6" rx="3" transform="rotate(-45 15 9)"/></g>',
  flag: '<path d="M1 1H10V23H1Z" fill="#f8f8f8" stroke="#666"/><path d="M10 1H24V11H10Z" fill="#5aace6" stroke="#3b86ba"/>',
  sketchSmall: '<path d="M2 2H21V21H2Z" fill="#fafafa" stroke="#555"/><path d="M7 7H16Q16 16 7 17Z" fill="none" stroke="#555"/><path d="M0 0H4V4H0ZM19 0H23V4H19ZM0 19H4V23H0ZM6 6H9V9H6ZM14 6H17V9H14ZM6 15H9V18H6Z" fill="#4b96d6"/><path d="M13 23L15 18L20 13L23 16L18 21Z" fill="#f5b53a" stroke="#f1f1f1"/><circle cx="22" cy="14" r="2" fill="#e23b3b"/>',
  move: '<path d="M12 4V20M4 12H20" stroke="#222" stroke-width="2"/><path d="M12 0L16 6H8ZM12 24L8 18H16ZM0 12L6 8V16ZM24 12L18 8V16Z" fill="#222"/>',
  split: '<path d="M1 14L5 10H14V20L10 23H1Z" fill="#ddd" stroke="#777"/><path d="M3 9L10 1L22 13L14 21Z" fill="#dd8a58" stroke="#b96d40"/><path d="M10 11L14 9V17L10 20Z" fill="#6fbe83"/><path d="M8 5L18 17M15 5L8 14" stroke="#f7d0b6" fill="none"/>',
  pattern: '<g fill="#5aace6"><circle cx="12" cy="3" r="3"/><circle cx="19" cy="7" r="3"/><circle cx="19" cy="16" r="3"/><circle cx="12" cy="20" r="3"/><circle cx="5" cy="16" r="3"/></g><circle cx="5" cy="7" r="2" fill="#eee" stroke="#777"/>',
  mirror: '<path d="M11 2V22H1Z" fill="#eee" stroke="#555"/><path d="M13 2V22H23Z" fill="#5aace6" stroke="#3b86ba"/><path d="M12 0V24" stroke="#555"/>',
  cog: '<path d="M10 1H14L15 5L18 6L21 4L23 8L20 11V13L23 16L21 20L18 18L15 19L14 23H10L9 19L6 18L3 20L1 16L4 13V11L1 8L3 4L6 6L9 5Z" fill="#666"/><circle cx="12" cy="12" r="4" fill="#f1f1f1"/>',
};
</script>

<style>
body {
  margin: 0;
}
</style>

<style scoped>
.app {
  display: flex;
  flex-direction: column;
  min-height: 100vh;
  background: #f1f1f1;
  color: #333;
  font-family: "Liberation Sans", Arial, sans-serif;
  font-size: 16px;
  line-height: 20px;
  overflow: hidden;
}

button,
input,
select {
  font: inherit;
  color: inherit;
}

button {
  cursor: pointer;
}

svg {
  display: block;
  flex-shrink: 0;
}

.plain {
  display: flex;
  align-items: center;
  padding: 0;
  border: 0;
  background: none;
}

.caret {
  border: 5px solid transparent;
  border-top: 8px solid #333;
  border-bottom: 0;
}

.titlebar {
  display: flex;
  align-items: center;
  height: 34px;
  padding: 0 28px 0 3px;
  background: #f3f3f3;
}

.titlebar__logo {
  width: 22px;
  height: 26px;
}

.titlebar__fus {
  fill: #fff;
  font-size: 6px;
  font-weight: 700;
  text-anchor: middle;
}

.titlebar__text {
  margin-left: 9px;
  color: #888;
  font-family: "Open Sans", "Noto Sans", sans-serif;
  font-size: 17px;
}

.titlebar__controls {
  display: flex;
  gap: 54px;
  margin-left: auto;
}

.titlebar__controls svg {
  width: 16px;
  height: 16px;
}

.win {
  fill: none;
  stroke: #777;
}

.docbar {
  display: flex;
  align-items: stretch;
  height: 42px;
  padding-top: 6px;
  background: #cacaca;
}

.docbar__tools {
  display: flex;
  align-items: center;
  width: 278px;
  gap: 26px;
  padding-left: 12px;
  padding-bottom: 6px;
}

.docbar__tool {
  gap: 7px;
}

.docbar__tool .caret {
  border-top-color: #555;
}

.docbar__tool:last-child {
  margin-left: -9px;
}

.dim {
  opacity: 0.6;
}

.docbar__home {
  width: 58px;
  padding: 4px 0 0 4px;
  justify-content: center;
  border-radius: 6px 6px 0 0;
  background: #b9b9b9;
}

.docbar__tab {
  position: relative;
  display: flex;
  flex: 1;
  align-items: center;
  justify-content: center;
  gap: 8px;
  margin: 0 7px 0 6px;
  padding: 3px 16px 0 0;
  border-radius: 6px 6px 0 0;
  background: #f1f1f1;
  font-family: "Open Sans", "Noto Sans", sans-serif;
  font-size: 17px;
}

.docbar__close {
  position: absolute;
  top: 0;
  right: 4px;
  display: flex;
  align-items: flex-end;
  justify-content: center;
  width: 22px;
  height: 28px;
  padding: 0;
  border: 1px solid #ccc;
  border-radius: 4px;
  background: #fff;
}

.docbar__new {
  width: 42px;
  justify-content: center;
  border-radius: 6px 6px 0 0;
  background: #b5b5b5;
}

.docbar__right {
  display: flex;
  align-items: center;
  gap: 24px;
  padding: 0 20px 6px 17px;
}

.docbar__jobs {
  gap: 7px;
  margin-right: 8px;
}

.docbar__user {
  margin-left: 4px;
}

.ribbon {
  display: flex;
  align-items: flex-start;
  height: 122px;
  border-bottom: 1px solid #ccc;
  margin-bottom: 5px;
}

.ribbon__design {
  display: flex;
  align-items: center;
  justify-content: center;
  gap: 8px;
  width: 165px;
  height: 92px;
  margin: 16px 7px 0 17px;
  border: 2px solid #d0d0d0;
  border-radius: 6px;
  background: #f4f4f4;
  font-weight: 700;
}

.ribbon__tabs {
  display: flex;
  padding-left: 15px;
}

.ribbon__tab {
  height: 35px;
  padding: 2px 22px 0;
  margin-left: 28px;
  border: 0;
  border-bottom: 4px solid transparent;
  background: none;
  white-space: nowrap;
}

.ribbon__tab:first-child {
  margin-left: 0;
}

.ribbon__tab.active {
  padding: 2px 20px 0;
  color: #1591cf;
  border-color: #1591cf;
  font-weight: 700;
}

.ribbon__groups {
  display: flex;
  padding-top: 5px;
}

.group {
  display: flex;
  flex-direction: column;
  align-items: center;
  height: 77px;
  padding: 0 15px;
  border-right: 1px solid #ccc;
}

.group:nth-child(4) {
  padding: 0 18px;
}

.group:last-child {
  border: 0;
}

.group__icons {
  display: flex;
  gap: 17px;
}

.group__label {
  gap: 5px;
  margin-top: 9px;
  padding: 0 5px;
}

.canvas {
  position: relative;
  flex: 1;
  background: #fff;
  border-bottom: 1px solid #c8c8c8;
  overflow: hidden;
}

.canvas__scene {
  position: absolute;
  width: 100%;
  height: 100%;
}

.grid-minor {
  stroke: #e8e8e8;
}

.grid-major {
  stroke: #c2c2c2;
}

.handle {
  fill: #dedede;
  stroke: #222;
  stroke-width: 2px;
}

.dim-text {
  fill: #294f8e;
  font-size: 22px;
  text-anchor: middle;
}

.panel-head {
  display: flex;
  align-items: center;
  box-sizing: border-box;
  height: 37px;
  padding: 0 16px 0 4px;
  border: 1px solid #ccc;
  border-bottom: 2px solid #c4c4c4;
  background: #f1f1f1;
  color: #555;
}

.panel-head .plain {
  margin-left: auto;
}

.browser {
  position: absolute;
  top: 6px;
  left: 6px;
  width: 449px;
}

.browser__fold {
  display: flex;
  align-items: center;
  justify-content: center;
  width: 22px;
  height: 22px;
  margin-right: 11px;
  padding: 0;
  border: 1px solid #999;
  background: #e2e2e2;
}

.browser__body {
  display: flex;
  padding: 8px 0 0 6px;
}

.browser__scroll {
  width: 9px;
  border-radius: 4px 4px 0 0;
  background: #c6c6c6;
}

.browser__thumb {
  width: 9px;
  height: 395px;
  border-radius: 4px;
  background: #959595;
}

.tree {
  display: flex;
  flex-direction: column;
  gap: 6px;
  margin: 0;
  padding: 0;
  list-style: none;
}

.tree__row {
  display: flex;
  align-items: center;
  height: 30px;
}

.level-0 {
  padding-left: 12px;
}

.level-1 {
  padding-left: 39px;
}

.level-2 {
  padding-left: 93px;
}

.tree__toggle {
  margin-right: 15px;
}

.tree__cells {
  display: flex;
  align-items: center;
  height: 30px;
  background: #f1f1f1;
}

.tree__eye {
  width: 38px;
  padding-left: 5px;
}

.tree__item {
  display: flex;
  align-items: center;
  box-sizing: border-box;
  height: 30px;
  gap: 21px;
  padding: 0 16px 0 5px;
  white-space: nowrap;
}

.root .tree__item {
  height: 24px;
  background: #8f8f8f;
  color: #fff;
  font-weight: 700;
}

.selected .tree__item {
  background: #0696d7;
  color: #fff;
  font-weight: 700;
}

.target .tree__item {
  position: relative;
}

.target .tree__item::after {
  content: "";
  position: absolute;
  bottom: 2px;
  left: 0;
  width: 116px;
  height: 5px;
  background: repeating-linear-gradient(120deg, #6f7fae 0 3px, transparent 3px 8px);
}

.tree__radio {
  appearance: none;
  width: 20px;
  height: 20px;
  margin: 0 13px 0 7px;
  border: 1px solid #555;
  border-radius: 50%;
  background: radial-gradient(#333 0 4px, #dde3ee 5px);
}

.comments {
  position: absolute;
  bottom: 6px;
  left: 6px;
  width: 449px;
  padding-left: 37px;
}

.viewcube {
  position: absolute;
  top: 10px;
  right: 11px;
}

.cube-z,
.cube-x {
  font-size: 13px;
}

.cube-z {
  fill: #7a74ee;
}

.cube-x {
  fill: #f07c7c;
}

.cube-face {
  fill: #85898e;
  font-size: 12px;
  font-weight: 700;
  text-anchor: middle;
}

.value-box {
  position: absolute;
  top: 167px;
  left: 1319px;
  display: flex;
  align-items: center;
  box-sizing: border-box;
  height: 33px;
  padding: 0 12px 0 4px;
  background: #f1f1f1;
}

.value-box__grip {
  width: 6px;
  height: 29px;
  margin-right: 6px;
  background: repeating-linear-gradient(135deg, #ddd 0 1px, #f1f1f1 1px 4px);
  border-right: 1px solid #ccc;
  padding-right: 4px;
}

.value-box__field {
  position: relative;
}

.value-box input {
  box-sizing: border-box;
  width: 105px;
  height: 29px;
  padding: 0 14px;
  border: 1px solid #ccc;
  background: #fff;
}

.value-box__field i {
  position: absolute;
  top: 5px;
  left: 47px;
  width: 2px;
  height: 20px;
  background: #000;
}

.value-box__dots {
  margin: 0 22px 0 16px;
}

.dialog {
  position: absolute;
  top: 126px;
  right: 7px;
  box-sizing: border-box;
  width: 373px;
  border: 1px solid #c8c8c8;
  border-bottom: 2px solid #c4c4c4;
  background: #f1f1f1;
}

.dialog__head {
  display: flex;
  align-items: center;
  height: 34px;
  gap: 6px;
  padding: 0 6px 0 16px;
  border-bottom: 2px solid #c8c8c8;
  color: #555;
}

.dialog__head .plain:last-child {
  margin-left: auto;
}

.dialog__rows {
  padding: 0 0 1px 18px;
  border-bottom: 1px solid #c4c4c4;
}

.dialog__row {
  display: flex;
  align-items: center;
  height: 45px;
}

.dialog__row > :first-child {
  width: 114px;
}

.dialog__select {
  position: relative;
  display: flex;
  align-items: center;
}

.dialog__select svg,
.dialog__select .caret {
  position: absolute;
  pointer-events: none;
}

.dialog__select svg {
  left: 6px;
}

.dialog__select .caret {
  right: 8px;
}

.dialog__select select {
  appearance: none;
  width: 192px;
  height: 40px;
  padding: 0 24px 0 35px;
  border: 1px solid #ccc;
  border-radius: 0;
  background: #fff;
}

.dialog__picked {
  display: flex;
  align-items: center;
  justify-content: center;
  gap: 7px;
  width: 118px;
  height: 40px;
  padding: 0;
  border: 0;
  background: #0696d7;
  color: #fff;
  white-space: nowrap;
}

.dialog__clear {
  margin-left: 17px;
}

.dialog__types {
  display: flex;
  gap: 8px;
}

.dialog__types button {
  justify-content: center;
  width: 35px;
  height: 40px;
}

.dialog__types .active {
  background: #0696d7;
}

.dialog__pivot {
  margin-left: 6px;
}

.dialog__input {
  box-sizing: border-box;
  width: 191px;
  height: 38px;
  padding: 0 5px;
  border: 1px solid #ccc;
  background: #fff;
}

.disabled {
  color: #b0b0b0;
}

.dialog__check {
  appearance: none;
  width: 20px;
  height: 20px;
  margin: 0 0 0 8px;
  border: 1px solid #999;
  border-radius: 4px;
  background: linear-gradient(#f2f2f2, #dcdcdc);
}

.dialog__foot {
  display: flex;
  align-items: center;
  height: 54px;
  gap: 15px;
  padding: 0 16px 0 12px;
}

.dialog__foot svg {
  margin-right: auto;
}

.dialog__foot button {
  width: 90px;
  height: 30px;
  padding: 0;
  border: 1px solid #aaa;
  background: #e8e8e8;
  color: #555;
}

.hint {
  position: absolute;
  top: 675px;
  left: 1150px;
  padding: 3px 6px 3px 5px;
  border-bottom: 1px solid #999;
  background: #f7f7f7;
  color: #222;
  font-family: "Open Sans", "Noto Sans", sans-serif;
  font-size: 17px;
}

.navbar {
  position: absolute;
  bottom: 9px;
  left: 783px;
  display: flex;
  align-items: center;
  box-sizing: border-box;
  height: 36px;
  gap: 14px;
  padding: 0 6px 0 5px;
  background: #f1f1f1;
}

.navbar__item {
  gap: 4px;
}

.navbar__item:nth-child(2),
.navbar__item:nth-child(n + 7) {
  margin-left: -5px;
}

.navbar__item .caret {
  border-top-width: 7px;
}

.status {
  position: absolute;
  right: 24px;
  bottom: 13px;
  font-weight: 700;
}

.timeline {
  display: flex;
  align-items: center;
  height: 74px;
  padding: 0 19px 0 15px;
}

.timeline__play {
  display: flex;
  gap: 18px;
  margin-right: 25px;
}

.timeline__track {
  display: flex;
  height: 50px;
  margin: 22px 0 0;
  padding: 0;
  list-style: none;
}

.timeline__step {
  position: relative;
  display: flex;
  flex-direction: column;
  align-items: center;
  width: 36px;
}

/* tick above the rail and the rail itself */
.timeline__step::before {
  content: "";
  position: absolute;
  top: 29px;
  left: 18px;
  width: 3px;
  height: 9px;
  background: #c6c6c6;
}

.timeline__step:not(:last-child)::after {
  content: "";
  position: absolute;
  top: 36px;
  left: 18px;
  width: 39px;
  height: 3px;
  background: #c6c6c6;
}

.timeline__step.future > svg {
  opacity: 0.25;
}

.timeline__plus {
  position: absolute;
  z-index: 1;
  top: 30px;
  left: 8px;
}

.timeline__head {
  position: absolute;
  z-index: 2;
  top: -10px;
  left: 27px;
}

.timeline__gear {
  margin-left: auto;
}
</style>
